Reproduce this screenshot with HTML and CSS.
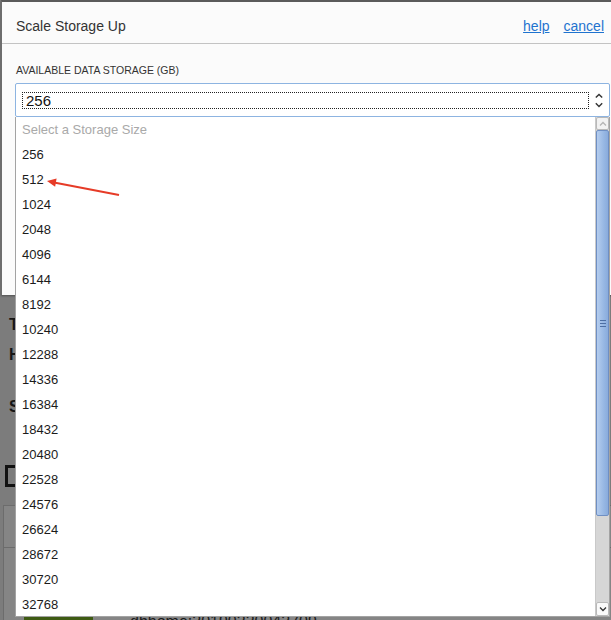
FILE: index.html
```html
<!DOCTYPE html>
<html>
<head>
<meta charset="utf-8">
<title>Scale Storage Up</title>
<link rel="stylesheet" href="styles.css">
</head>
<body>
<div class="page">
  <div class="bg-line bg-first">Type</div>
  <div class="bg-line bg-second">Host</div>
  <div class="bg-line bg-third">Shape</div>
  <div class="bg-bracket"></div>
  <div class="bg-panel">
    <div class="bg-panel-head"></div>
    <div class="bg-panel-body">
      <div class="bg-green"></div>
      <div class="bg-text">dbhome:20190220042709</div>
    </div>
  </div>
</div>

<div class="dialog">
  <div class="dlg-head">
    <span class="dlg-title">Scale Storage Up</span>
    <span class="dlg-links"><a class="dlg-link">help</a><a class="dlg-link">cancel</a></span>
  </div>
  <div class="dlg-body">
    <div class="field-label">AVAILABLE DATA STORAGE (GB)</div>
    <div class="select">
      <span class="focus-ring">256</span>
      <svg class="chevrons" width="8" height="15" viewBox="0 0 8 15">
        <path d="M0.8 4.6 L4 1.4 L7.2 4.6" fill="none" stroke="#333" stroke-width="1.4"/>
        <path d="M0.8 10.2 L4 13.4 L7.2 10.2" fill="none" stroke="#333" stroke-width="1.4"/>
      </svg>
    </div>
  </div>
</div>

<div class="listbox">
  <div class="options">
    <div class="opt opt-placeholder">Select a Storage Size</div>
    <div class="opt">256</div>
    <div class="opt">512</div>
    <div class="opt">1024</div>
    <div class="opt">2048</div>
    <div class="opt">4096</div>
    <div class="opt">6144</div>
    <div class="opt">8192</div>
    <div class="opt">10240</div>
    <div class="opt">12288</div>
    <div class="opt">14336</div>
    <div class="opt">16384</div>
    <div class="opt">18432</div>
    <div class="opt">20480</div>
    <div class="opt">22528</div>
    <div class="opt">24576</div>
    <div class="opt">26624</div>
    <div class="opt">28672</div>
    <div class="opt">30720</div>
    <div class="opt">32768</div>
  </div>
  <div class="scrollbar">
    <div class="sb-btn sb-up">
      <svg width="8" height="6" viewBox="0 0 8 6"><path d="M1 4.5 L4 1.5 L7 4.5" fill="none" stroke="#b5b5b5" stroke-width="1.3"/></svg>
    </div>
    <div class="sb-thumb">
      <span class="grip"></span><span class="grip"></span><span class="grip"></span>
    </div>
    <div class="sb-track"></div>
    <div class="sb-btn sb-down">
      <svg width="8" height="6" viewBox="0 0 8 6"><path d="M1 1.5 L4 4.5 L7 1.5" fill="none" stroke="#333" stroke-width="1.3"/></svg>
    </div>
  </div>
</div>

<svg class="annot" width="611" height="620" viewBox="0 0 611 620">
  <line x1="119" y1="195" x2="54" y2="182.6" stroke="#e63b27" stroke-width="2"/>
  <polygon points="47,181 56.6,178.6 55.1,186.8" fill="#e63b27"/>
</svg>
</body>
</html>
```
FILE: styles.css
```css
html, body {
  margin: 0;
  padding: 0;
}
body {
  width: 611px;
  height: 620px;
  overflow: hidden;
  position: relative;
  background: #7c7c7c;
  font-family: "Liberation Sans", Arial, sans-serif;
}

/* dimmed page behind the dialog */
.page {
  padding: 313px 0 0 9px;
  display: flex;
  flex-direction: column;
  align-items: flex-start;
}
.bg-line {
  font-size: 16px;
  font-weight: bold;
  line-height: 24px;
  color: #161616;
}
.bg-second { margin-top: 6px; }
.bg-third { margin-top: 28px; }
.bg-bracket {
  margin: 46px 0 0 -4px;
  width: 40px;
  height: 22px;
  box-sizing: border-box;
  border: 3px solid #111;
}
.bg-panel {
  margin: 18px 0 0 -6px;
  width: 700px;
  height: 200px;
  box-sizing: border-box;
  border: 1px solid #6c6c6c;
  background: #858585;
}
.bg-panel-head {
  height: 41px;
  border-bottom: 1px solid #6c6c6c;
}
.bg-panel-body {
  display: flex;
  align-items: flex-start;
  padding: 68px 0 0 20px;
}
.bg-green {
  width: 69px;
  height: 30px;
  background: #3e5b13;
}
.bg-text {
  margin: -3px 0 0 37px;
  font-size: 16px;
  color: #1a1a1a;
}

/* dialog */
.dialog {
  position: absolute;
  left: 1px;
  top: 0;
  width: 620px;
  height: 295px;
  box-sizing: border-box;
  background: #fbfbfb;
  border-left: 1px solid #6e6e6e;
  border-top: 2px solid #5b5b5b;
  box-shadow: 0 1px 2px rgba(0, 0, 0, 0.35);
}
.dlg-head {
  height: 42px;
  box-sizing: border-box;
  padding: 7px 17px 0 14px;
  border-bottom: 1px solid #c3c3c3;
  display: flex;
  align-items: center;
  justify-content: space-between;
}
.dlg-title {
  font-size: 14px;
  color: #333;
}
.dlg-links {
  display: flex;
  gap: 14px;
}
.dlg-link {
  font-size: 14px;
  color: #1f73cf;
  text-decoration: underline;
  cursor: pointer;
}
.dlg-body {
  padding: 20px 0 0 13px;
}
.field-label {
  padding-left: 1px;
  font-size: 10.5px;
  line-height: 12px;
  color: #333;
  margin-bottom: 7px;
}
.select {
  width: 595px;
  height: 34px;
  box-sizing: border-box;
  border: 1px solid #8db4e1;
  border-radius: 2px;
  background: #fff;
  display: flex;
  align-items: center;
  padding: 0 6px;
  gap: 6px;
}
.focus-ring {
  flex: 1;
  height: 17px;
  box-sizing: border-box;
  border: 1px dotted #222;
  padding-left: 3px;
  font-size: 15px;
  line-height: 15px;
  color: #111;
}
.chevrons {
  display: block;
  flex: none;
}

/* open dropdown list */
.listbox {
  position: absolute;
  left: 15px;
  top: 117px;
  width: 595px;
  height: 500px;
  box-sizing: border-box;
  border: 1px solid #a3a3a3;
  border-top: 0;
  background: #fff;
  display: flex;
  overflow: hidden;
}
.options {
  flex: 1;
  overflow: hidden;
}
.opt {
  height: 25px;
  line-height: 25px;
  padding-left: 6px;
  font-size: 13px;
  color: #1b1b1b;
}
.opt-placeholder {
  color: #a9a9a9;
}
.scrollbar {
  width: 14px;
  flex: none;
  display: flex;
  flex-direction: column;
  background: #d8d8d8;
  border-left: 1px solid #c9c9c9;
  box-sizing: border-box;
}
.sb-btn {
  display: flex;
  align-items: center;
  justify-content: center;
  box-sizing: border-box;
  background: #f2f2f2;
  border: 1px solid #b9b9b9;
  border-radius: 2px;
}
.sb-up { height: 13px; }
.sb-down { height: 14px; background: #fafafa; }
.sb-thumb {
  height: 386px;
  box-sizing: border-box;
  border: 1px solid #6f8fc3;
  border-radius: 2px;
  background: linear-gradient(to right, #b5cdee, #98b8e4 60%, #89abdc);
  display: flex;
  flex-direction: column;
  align-items: center;
  justify-content: center;
  gap: 2px;
}
.grip {
  width: 6px;
  height: 1px;
  background: #4e6fa3;
}
.sb-track {
  flex: 1;
  background: #d6d6d6;
}

/* red annotation arrow */
.annot {
  position: absolute;
  left: 0;
  top: 0;
  pointer-events: none;
}
```
